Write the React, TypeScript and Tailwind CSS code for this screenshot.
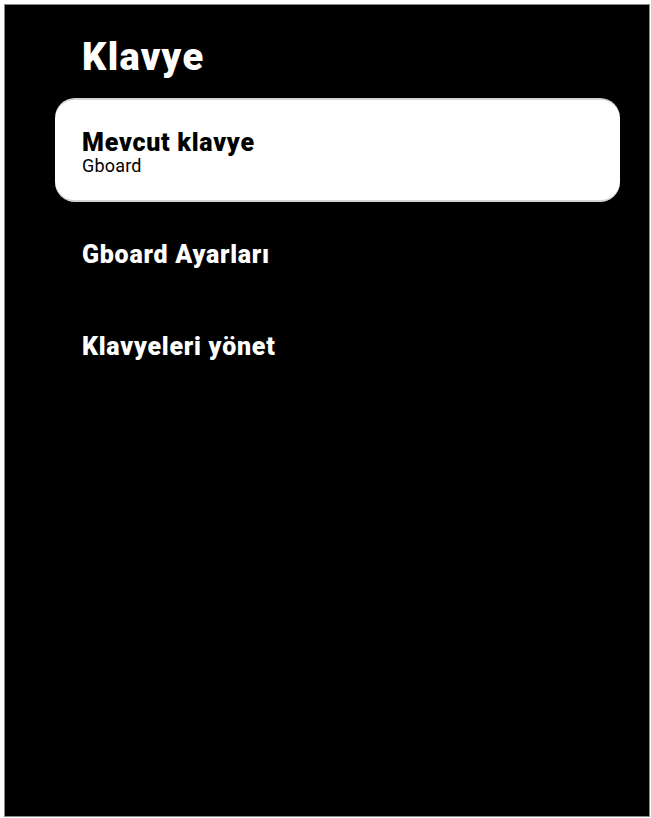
export default function App() {
  return (
    <div className="w-[651px] h-[818px] bg-white pt-[4px] pl-[4px] font-['Roboto',sans-serif]">
      <div className="w-[646px] h-[813px] bg-black border border-[#8a8a8a] flex flex-col">
        <h1 className="pt-[33px] pl-[77px] text-[38px] leading-none font-black tracking-[0.035em] text-white">Klavye</h1>

        {/* focused row */}
        <div className="mt-[22px] ml-[50px] mr-[29px] h-[104px] rounded-[20px] bg-white border-y-2 border-[#d4d4d4] pl-[27px] pt-[31px]">
          <div className="text-[25px] leading-[24px] font-black tracking-[0.03em] text-black">Mevcut klavye</div>
          <div className="mt-[2px] text-[18px] leading-[18px] tracking-[0.01em] text-black">Gboard</div>
        </div>

        <div className="mt-[40px] pl-[77px] text-[25px] leading-none font-black tracking-[0.03em] text-white">Gboard Ayarları</div>
        <div className="mt-[67px] pl-[77px] text-[25px] leading-none font-black tracking-[0.03em] text-white">Klavyeleri yönet</div>
      </div>
    </div>
  );
}
